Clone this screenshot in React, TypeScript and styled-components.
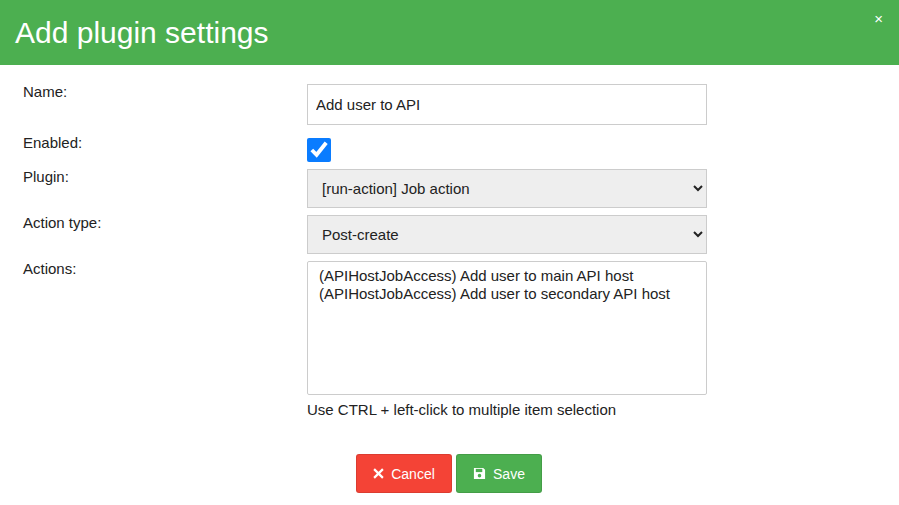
import React from "react";
import styled, { createGlobalStyle } from "styled-components";

const Global = createGlobalStyle`
  body { margin: 0; font-family: "Liberation Sans", Arial, sans-serif; background: #fff; color: #222; }
`;
const Header = styled.div`
  height: 65px; background: #4caf50; color: #fff; position: relative;
  display: flex; align-items: center; padding-left: 15px; box-sizing: border-box;
`;
const Title = styled.h1`margin: 0; font-weight: 400; font-size: 30px; font-family: "Liberation Sans", Arial, sans-serif;`;
const Close = styled.span`position: absolute; right: 16px; top: 10px; font-size: 15px; color: #fff;`;
const Body = styled.div`padding: 19px 0 0 23px;`;
const Row = styled.div<{ $mt?: number }>`
  display: grid; grid-template-columns: 284px 400px; margin-top: ${p => p.$mt ?? 7}px;
`;
const Label = styled.label<{ $up?: number }>`font-size: 15px; margin-top: ${p => -(p.$up ?? 1)}px; color: #222;`;
const TextInput = styled.input`
  box-sizing: border-box; width: 400px; height: 41px; border: 1px solid #ccc;
  padding: 0 8px; font-size: 15px; font-family: inherit; color: #222;
`;
const CheckWrap = styled.div`display: flex; height: 24px;`;
const Check = styled.input`
  width: 24px; height: 24px; margin: 0; accent-color: #0a7cff;
`;
const Select = styled.select`
  box-sizing: border-box; width: 400px; height: 39px; border: 1px solid #ccc;
  background: #eee; font-size: 15px; font-family: inherit; color: #222; padding: 0 10px;
`;
const List = styled.select`
  box-sizing: border-box; width: 400px; height: 134px; border: 1px solid #ccc;
  font-size: 15px; font-family: inherit; color: #222; padding: 5px 11px; outline: none; display: block;
  option { padding: 0; }
`;
const Hint = styled.div`font-size: 15px; margin-top: 6px;`;
const Buttons = styled.div`display: flex; gap: 4px; margin: 36px 0 0 333px;`;
const Btn = styled.button<{ $bg: string; $w: number }>`
  width: ${p => p.$w}px; height: 39px; border: 1px solid rgba(0,0,0,0.1); border-radius: 3px;
  background: ${p => p.$bg}; color: #fff; font-size: 14px; font-family: inherit;
  display: flex; align-items: center; justify-content: center; gap: 7px;
`;

export default function App() {
  return (
    <>
      <Global />
      <Header><Title>Add plugin settings</Title><Close>×</Close></Header>
      <Body>
        <Row $mt={0}><Label>Name:</Label><TextInput defaultValue="Add user to API" /></Row>
        <Row $mt={13}><Label $up={4}>Enabled:</Label><CheckWrap><Check type="checkbox" defaultChecked /></CheckWrap></Row>
        <Row><Label>Plugin:</Label><Select><option>[run-action] Job action</option></Select></Row>
        <Row><Label>Action type:</Label><Select><option>Post-create</option></Select></Row>
        <Row>
          <Label>Actions:</Label>
          <div>
            <List multiple>
              <option>(APIHostJobAccess) Add user to main API host</option>
              <option>(APIHostJobAccess) Add user to secondary API host</option>
            </List>
            <Hint>Use CTRL + left-click to multiple item selection</Hint>
          </div>
        </Row>
        <Buttons>
          <Btn $bg="#f44336" $w={96}>
            <svg width="11" height="11" viewBox="0 0 10 10"><path d="M1 1L9 9M9 1L1 9" stroke="#fff" strokeWidth="2" /></svg>
            Cancel
          </Btn>
          <Btn $bg="#4caf50" $w={86}>
            <svg width="13" height="13" viewBox="0 0 14 14"><path d="M1 1h10l2 2v10H1z" fill="#fff" /><rect x="3" y="2" width="7" height="3.5" fill="#4caf50" /><circle cx="7" cy="9.3" r="1.9" fill="#4caf50" /></svg>
            Save
          </Btn>
        </Buttons>
      </Body>
    </>
  );
}
